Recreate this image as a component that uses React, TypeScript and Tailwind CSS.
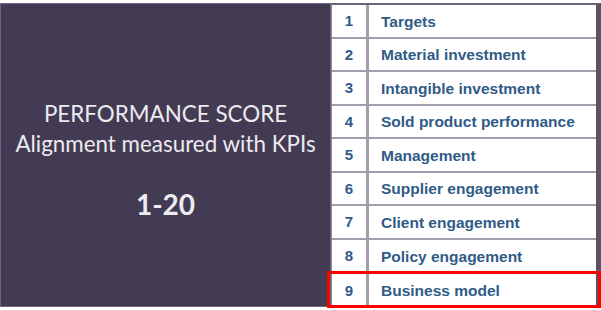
import React from "react";

const rows = [
  "Targets",
  "Material investment",
  "Intangible investment",
  "Sold product performance",
  "Management",
  "Supplier engagement",
  "Client engagement",
  "Policy engagement",
  "Business model",
];

export default function App() {
  return (
    <div className="relative w-[601px] h-[310px] bg-white overflow-hidden">
      <div className="flex pt-[3px] h-[307px]">
        <div
          className="w-[331px] h-[304px] bg-[#433a53] border border-[#6d6580] flex flex-col items-center justify-center text-[#ecebef]"
          style={{ fontFamily: "Lato, 'Open Sans', sans-serif" }}
        >
          <div className="text-[22.4px] leading-[30px] mt-[9px]">PERFORMANCE SCORE</div>
          <div className="text-[22.4px] leading-[30px]">Alignment measured with KPIs</div>
          <div className="text-[28px] leading-[34px] font-bold mt-[28px]">1-20</div>
        </div>
        <div
          className="flex-1 flex flex-col border-t-2 border-t-[#6a6278] border-r-[5px] border-r-[#5b5468] border-l border-l-[#8a8296] bg-white"
          style={{ fontFamily: "'Liberation Sans', Arial, sans-serif" }}
        >
          {rows.map((r, i) => (
            <div
              key={i}
              className={`flex h-[34px] ${i < rows.length - 1 ? "border-b-2 border-b-[#a29cab]" : ""}`}
            >
              <div className="w-[34px] flex items-center justify-center text-[15px] font-bold text-[#305b87] pt-[1px]">
                {i + 1}
              </div>
              <div className="w-[3px] bg-[#a39dad]" />
              <div className="flex-1 flex items-center pl-[12px] text-[15.5px] font-bold text-[#305b87] whitespace-nowrap pt-[1px]">
                {r}
              </div>
            </div>
          ))}
        </div>
      </div>
      <div className="absolute left-[327px] top-[271px] w-[274px] h-[37px] border-[3px] border-[#ff0000]" />
    </div>
  );
}
